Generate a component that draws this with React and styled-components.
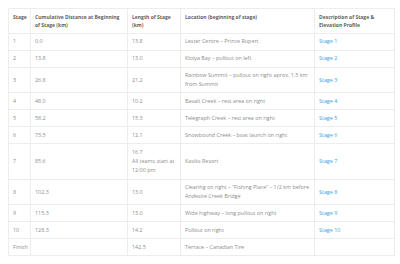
import React from 'react';
import styled, { createGlobalStyle } from 'styled-components';

const GlobalStyle = createGlobalStyle`
    html, body {
        margin: 0;
        background: #ffffff;
    }
    body {
        padding: 8px;
        font-family: "Open Sans", "Liberation Sans", sans-serif;
    }
`;

const stages = [
    { stage: '1', dist: '0.0', length: ['13.8'], location: 'Lester Centre – Prince Rupert', link: 'Stage 1' },
    { stage: '2', dist: '13.8', length: ['13.0'], location: 'Kloiya Bay – pullout on left', link: 'Stage 2' },
    { stage: '3', dist: '26.8', length: ['21.2'], location: 'Rainbow Summit – pullout on right aprox. 1.5 km from Summit', link: 'Stage 3' },
    { stage: '4', dist: '48.0', length: ['10.2'], location: 'Basalt Creek – rest area on right', link: 'Stage 4' },
    { stage: '5', dist: '58.2', length: ['15.3'], location: 'Telegraph Creek – rest area on right', link: 'Stage 5' },
    { stage: '6', dist: '73.5', length: ['12.1'], location: 'Snowbound Creek – boat launch on right', link: 'Stage 6' },
    { stage: '7', dist: '85.6', length: ['16.7', 'All teams start at 12:00 pm'], location: 'Kasiks Resort', link: 'Stage 7' },
    { stage: '8', dist: '102.3', length: ['13.0'], location: 'Clearing on right – “Fishing Place” – 1/2 km before Andesite Creek Bridge', link: 'Stage 8' },
    { stage: '9', dist: '115.3', length: ['13.0'], location: 'Wide highway – long pullout on right', link: 'Stage 9' },
    { stage: '10', dist: '128.3', length: ['14.2'], location: 'Pullout on right', link: 'Stage 10' },
    { stage: 'Finish', dist: '', length: ['142.5'], location: 'Terrace – Canadian Tire', link: '' },
];

export default function App() {
    return (
        <>
            <GlobalStyle />
            <StageTable>
                <colgroup>
                    <col style={{ width: 22 }} />
                    <col style={{ width: 97 }} />
                    <col style={{ width: 53 }} />
                    <col style={{ width: 134 }} />
                    <col style={{ width: 80 }} />
                </colgroup>
                <thead>
                    <tr>
                        <HeadCell>Stage</HeadCell>
                        <HeadCell>Cumulative Distance at Beginning of Stage (km)</HeadCell>
                        <HeadCell>Length of Stage (km)</HeadCell>
                        <HeadCell>Location (beginning of stage)</HeadCell>
                        <HeadCell>Description of Stage &amp; Elevation Profile</HeadCell>
                    </tr>
                </thead>
                <tbody>
                    {stages.map(row => (
                        <tr key={row.stage}>
                            <Cell>{row.stage}</Cell>
                            <Cell>{row.dist}</Cell>
                            <Cell $loose={row.length.length > 1}>
                                {row.length.map((line, i) => (
                                    <React.Fragment key={i}>
                                        {i > 0 && <br />}
                                        {line}
                                    </React.Fragment>
                                ))}
                            </Cell>
                            <Cell>{row.location}</Cell>
                            <Cell>{row.link && <StageLink href="#">{row.link}</StageLink>}</Cell>
                        </tr>
                    ))}
                </tbody>
            </StageTable>
        </>
    );
}

const StageTable = styled.table`
    width: 386px;
    table-layout: fixed;
    border-collapse: collapse;
    border: 1px solid #ededed;
    font-size: 5px;
`;

const HeadCell = styled.th`
    text-align: left;
    vertical-align: top;
    font-weight: 700;
    color: #5f5f5f;
    line-height: 8px;
    padding: 3.75px 4px;
    border: 1px solid #ededed;
`;

const Cell = styled.td`
    vertical-align: middle;
    color: #8d8d8d;
    font-size: 5.4px;
    line-height: ${p => (p.$loose ? '9px' : '8.5px')};
    padding: 3.75px 4px;
    border: 1px solid #ededed;
`;

const StageLink = styled.a`
    color: #3d9fe0;
    text-decoration: none;
`;
